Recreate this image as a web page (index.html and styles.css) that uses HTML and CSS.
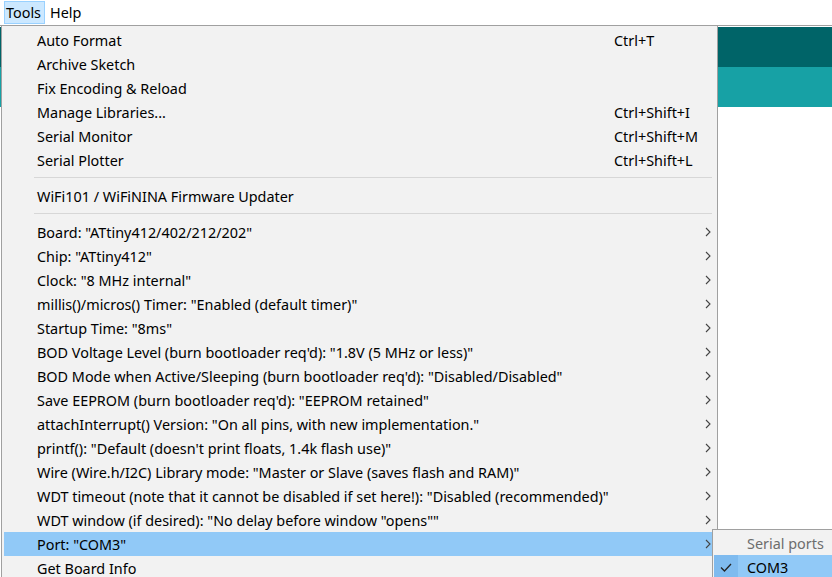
FILE: index.html
```html
<!DOCTYPE html>
<html>
<head>
<meta charset="utf-8">
<link rel="stylesheet" href="styles.css">
</head>
<body>
<div class="app">
  <div class="menubar">
    <span class="mb-item active">Tools</span>
    <span class="mb-item">Help</span>
  </div>
  <div class="gap"></div>
  <div class="toolbar"></div>
  <div class="tabs"></div>
  <div class="editor"></div>
</div>

<div class="menu">
  <div class="item"><span class="label">Auto Format</span><span class="side">Ctrl+T</span></div>
  <div class="item"><span class="label">Archive Sketch</span><span class="side"></span></div>
  <div class="item"><span class="label">Fix Encoding &amp; Reload</span><span class="side"></span></div>
  <div class="item"><span class="label">Manage Libraries...</span><span class="side">Ctrl+Shift+I</span></div>
  <div class="item"><span class="label">Serial Monitor</span><span class="side">Ctrl+Shift+M</span></div>
  <div class="item"><span class="label">Serial Plotter</span><span class="side">Ctrl+Shift+L</span></div>
  <div class="sep"></div>
  <div class="item"><span class="label">WiFi101 / WiFiNINA Firmware Updater</span><span class="side"></span></div>
  <div class="sep"></div>
  <div class="item"><span class="label">Board: "ATtiny412/402/212/202"</span><span class="side"><svg class="chev" width="6" height="10" viewBox="0 0 6 10"><path d="M1 1 L5 5 L1 9"/></svg></span></div>
  <div class="item"><span class="label">Chip: "ATtiny412"</span><span class="side"><svg class="chev" width="6" height="10" viewBox="0 0 6 10"><path d="M1 1 L5 5 L1 9"/></svg></span></div>
  <div class="item"><span class="label">Clock: "8 MHz internal"</span><span class="side"><svg class="chev" width="6" height="10" viewBox="0 0 6 10"><path d="M1 1 L5 5 L1 9"/></svg></span></div>
  <div class="item"><span class="label">millis()/micros() Timer: "Enabled (default timer)"</span><span class="side"><svg class="chev" width="6" height="10" viewBox="0 0 6 10"><path d="M1 1 L5 5 L1 9"/></svg></span></div>
  <div class="item"><span class="label">Startup Time: "8ms"</span><span class="side"><svg class="chev" width="6" height="10" viewBox="0 0 6 10"><path d="M1 1 L5 5 L1 9"/></svg></span></div>
  <div class="item"><span class="label">BOD Voltage Level (burn bootloader req'd): "1.8V (5 MHz or less)"</span><span class="side"><svg class="chev" width="6" height="10" viewBox="0 0 6 10"><path d="M1 1 L5 5 L1 9"/></svg></span></div>
  <div class="item"><span class="label">BOD Mode when Active/Sleeping (burn bootloader req'd): "Disabled/Disabled"</span><span class="side"><svg class="chev" width="6" height="10" viewBox="0 0 6 10"><path d="M1 1 L5 5 L1 9"/></svg></span></div>
  <div class="item"><span class="label">Save EEPROM (burn bootloader req'd): "EEPROM retained"</span><span class="side"><svg class="chev" width="6" height="10" viewBox="0 0 6 10"><path d="M1 1 L5 5 L1 9"/></svg></span></div>
  <div class="item"><span class="label">attachInterrupt() Version: "On all pins, with new implementation."</span><span class="side"><svg class="chev" width="6" height="10" viewBox="0 0 6 10"><path d="M1 1 L5 5 L1 9"/></svg></span></div>
  <div class="item"><span class="label">printf(): "Default (doesn't print floats, 1.4k flash use)"</span><span class="side"><svg class="chev" width="6" height="10" viewBox="0 0 6 10"><path d="M1 1 L5 5 L1 9"/></svg></span></div>
  <div class="item"><span class="label">Wire (Wire.h/I2C) Library mode: "Master or Slave (saves flash and RAM)"</span><span class="side"><svg class="chev" width="6" height="10" viewBox="0 0 6 10"><path d="M1 1 L5 5 L1 9"/></svg></span></div>
  <div class="item"><span class="label">WDT timeout (note that it cannot be disabled if set here!): "Disabled (recommended)"</span><span class="side"><svg class="chev" width="6" height="10" viewBox="0 0 6 10"><path d="M1 1 L5 5 L1 9"/></svg></span></div>
  <div class="item"><span class="label">WDT window (if desired): "No delay before window "opens""</span><span class="side"><svg class="chev" width="6" height="10" viewBox="0 0 6 10"><path d="M1 1 L5 5 L1 9"/></svg></span></div>
  <div class="item hl"><span class="label">Port: "COM3"</span><span class="side"><svg class="chev" width="6" height="10" viewBox="0 0 6 10"><path d="M1 1 L5 5 L1 9"/></svg></span></div>
  <div class="item"><span class="label">Get Board Info</span><span class="side"></span></div>
</div>

<div class="submenu">
  <div class="sitem disabled"><span class="check"></span><span class="label">Serial ports</span></div>
  <div class="sitem hl"><span class="check"><svg width="12" height="9" viewBox="0 0 12 9"><path d="M1 4.5 L4.5 8 L11 1"/></svg></span><span class="label">COM3</span></div>
</div>
</body>
</html>
```

FILE: styles.css
```css
html, body {
  margin: 0;
  padding: 0;
  background: #ffffff;
  font-family: "Noto Sans", "Open Sans", sans-serif;
  font-size: 14.4px;
  color: #000;
  overflow: hidden;
}

.app {
  width: 832px;
  height: 577px;
}

.menubar {
  display: flex;
  align-items: center;
  gap: 3px;
  padding-left: 4px;
  border-bottom: 1px solid #a0a0a0;
  box-sizing: border-box;
  height: 26px;
}

.mb-item {
  height: 23px;
  line-height: 22px;
  padding: 0 3px 0 1px;
  box-sizing: border-box;
  border: 1px solid transparent;
}

.mb-item.active {
  background: #cce8ff;
  border-color: #99d1ff;
}

.gap {
  height: 1px;
}

.toolbar {
  height: 40px;
  background: #006468;
}

.tabs {
  height: 40px;
  background: #17a1a5;
}

.menu {
  position: absolute;
  left: 1px;
  top: 25px;
  width: 711px;
  height: 560px;
  background: #f2f2f2;
  border: 1px solid #a0a0a0;
  padding: 2px;
}

.item {
  height: 24px;
  display: flex;
  align-items: center;
}

.item .label {
  flex: 1;
  padding-left: 33px;
  white-space: nowrap;
}

.item .side {
  width: 101px;
  display: flex;
  align-items: center;
  justify-content: space-between;
}

.item .side .chev {
  margin-left: auto;
  margin-right: 4px;
}

.chev path {
  fill: none;
  stroke: #444;
  stroke-width: 1.1;
}

.item.hl {
  background: #91c9f7;
}

.sep {
  height: 1px;
  background: #d7d7d7;
  margin: 5px 3px 6px 30px;
}

.submenu {
  position: absolute;
  left: 712px;
  top: 529px;
  width: 140px;
  height: 60px;
  background: #f2f2f2;
  border: 1px solid #a0a0a0;
  padding: 1px;
}

.sitem {
  height: 24px;
  display: flex;
  align-items: center;
}

.sitem .check {
  width: 24px;
  height: 24px;
  display: flex;
  align-items: center;
  justify-content: center;
}

.sitem .label {
  padding-left: 9px;
}

.sitem.disabled {
  color: #6d6d6d;
}

.sitem.hl {
  background: #91c9f7;
}

.sitem.hl .check {
  background: #7fbbef;
}

.check path {
  fill: none;
  stroke: #222;
  stroke-width: 1.3;
}
```
